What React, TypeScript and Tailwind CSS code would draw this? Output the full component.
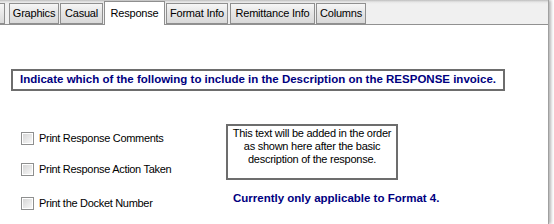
import React from "react";

const tabBase =
  "h-[21px] flex items-center justify-center border border-[#8f8f8f] bg-[linear-gradient(#f6f6f6,#e6e6e6_45%,#d9d9d9)] text-[11px] tracking-[-0.2px] text-black";

function Checkbox() {
  return (
    <div className="w-[13px] h-[13px] border border-[#8e8f8f] bg-white p-[1px] shrink-0">
      <div className="w-full h-full bg-[linear-gradient(135deg,#d6d6d6,#f7f7f7)]" />
    </div>
  );
}

export default function App() {
  const font = { fontFamily: '"Liberation Sans", Arial, sans-serif' };
  return (
    <div className="w-[554px] h-[224px] bg-white overflow-hidden" style={font}>
      <div className="w-[549px] h-[224px] border-r border-[#a0a0a0] shadow-[2px_0_3px_rgba(0,0,0,0.3)] bg-white">
        {/* tab strip */}
        <div className="h-[25px] flex items-end border-b border-[#919191] bg-[linear-gradient(#bdbdbd,#e6e6e6_2px,#f0f0f0_4px)]">
          <div className="h-[21px] w-[5px] border border-l-0 border-[#8f8f8f] bg-[linear-gradient(#f6f6f6,#dadada)]" />
          <div className={`${tabBase} w-[50px] ml-[4px]`}>Graphics</div>
          <div className={`${tabBase} w-[43px] ml-[1px]`}>Casual</div>
          <div className="h-[24px] w-[61px] ml-[1px] -mb-[1px] relative border border-b-0 border-[#8f8f8f] bg-white flex items-start justify-center pt-[3px] text-[11px] tracking-[-0.2px] text-black">
            Response
          </div>
          <div className={`${tabBase} w-[62px] ml-[1px]`}>Format Info</div>
          <div className={`${tabBase} w-[85px] ml-[2px]`}>Remittance Info</div>
          <div className={`${tabBase} w-[50px] ml-[1px]`}>Columns</div>
        </div>

        {/* content */}
        <div className="pt-[44px]">
          <div className="ml-[11px] w-[494px] h-[22px] border-2 border-[#6d6d6d] flex items-center justify-center">
            <span className="text-[11.5px] font-bold text-[#000080] leading-none">
              Indicate which of the following to include in the Description on the RESPONSE invoice.
            </span>
          </div>

          <div className="flex mt-[33px]">
            <div className="ml-[21px] w-[205px] pt-[8px] text-[11px] tracking-[-0.3px] text-black">
              <div className="h-[13px] flex items-center gap-[5px]">
                <Checkbox />
                <span>Print Response Comments</span>
              </div>
              <div className="h-[13px] flex items-center gap-[5px] mt-[18px]">
                <Checkbox />
                <span>Print Response Action Taken</span>
              </div>
              <div className="h-[13px] flex items-center gap-[5px] mt-[21px]">
                <Checkbox />
                <span>Print the Docket Number</span>
              </div>
            </div>
            <div>
              <div className="w-[172px] h-[56px] border-2 border-[#6d6d6d] pt-[1px] text-center text-[11px] tracking-[-0.25px] leading-[13px] text-black">
                This text will be added in the order
                <br />
                as shown here after the basic
                <br />
                description of the response.
              </div>
              <div className="ml-[7px] mt-[11px] text-[11.5px] font-bold text-[#000080] leading-[14px]">
                Currently only applicable to Format 4.
              </div>
            </div>
          </div>
        </div>
      </div>
    </div>
  );
}
